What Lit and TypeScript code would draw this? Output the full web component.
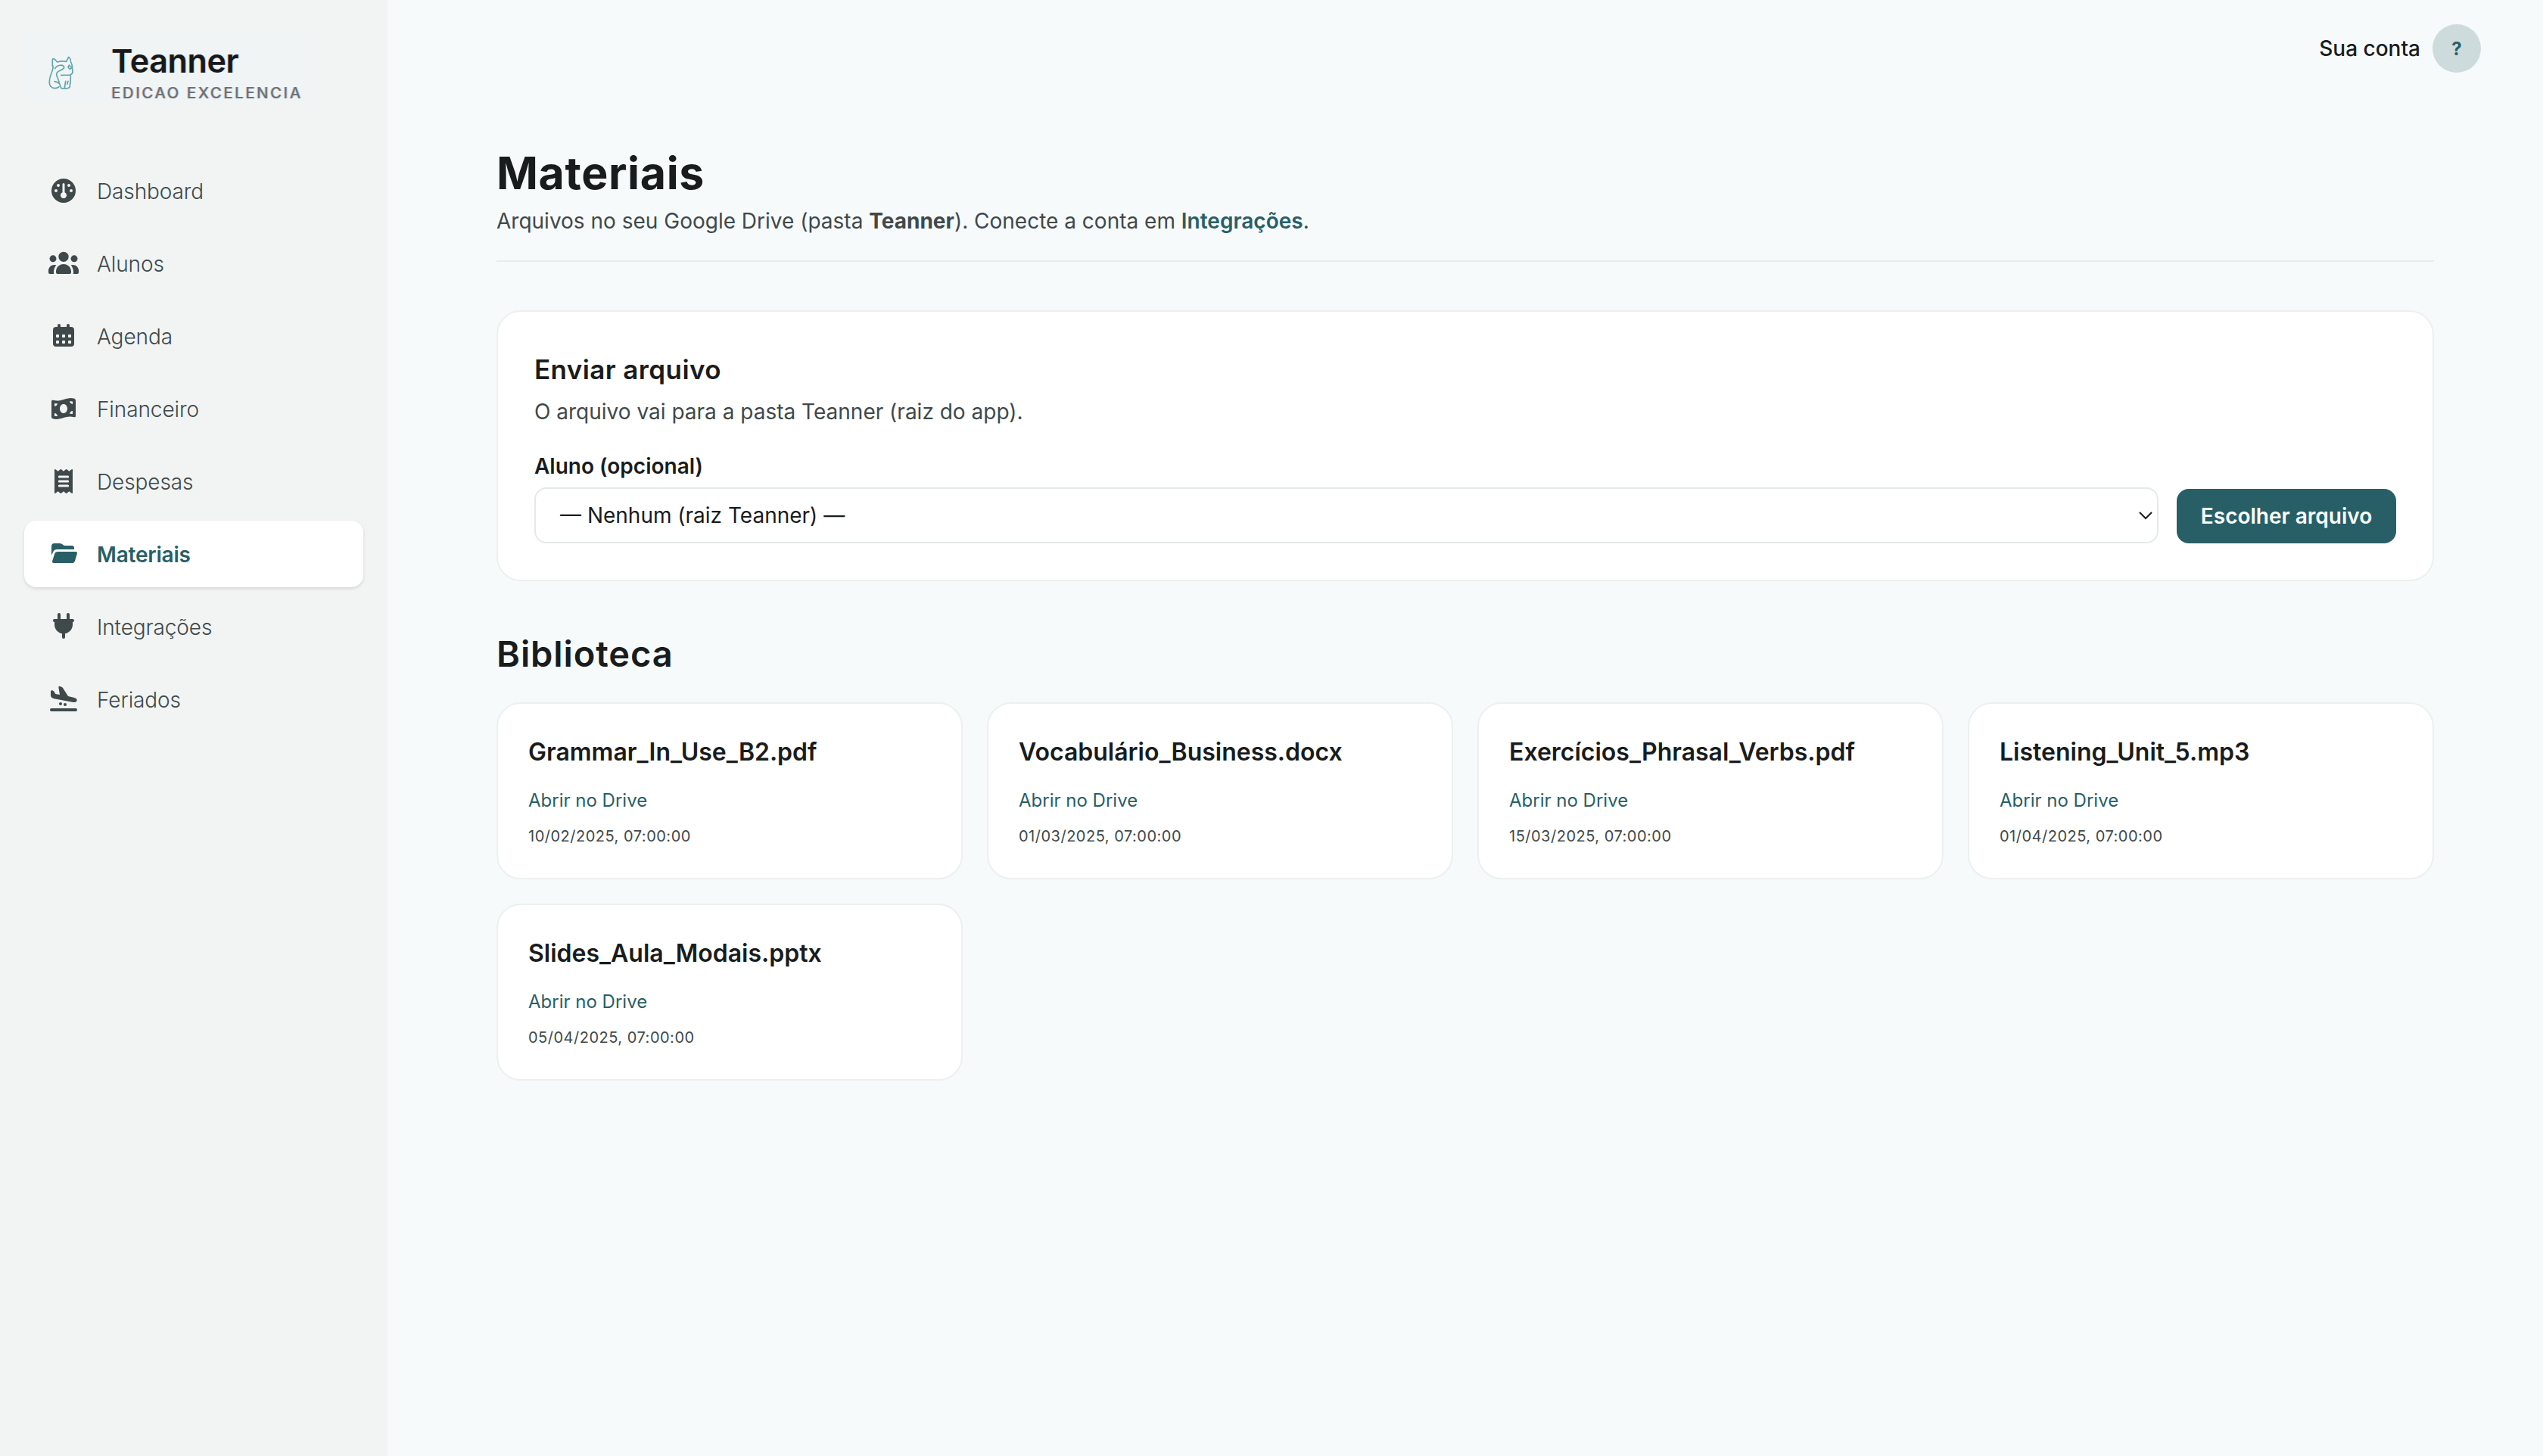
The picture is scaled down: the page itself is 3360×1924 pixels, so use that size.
import { LitElement, html, css, svg } from "lit";
import { customElement, property } from "lit/decorators.js";

const ICONS: Record<string, unknown> = {
  gauge: svg`<path fill-rule="evenodd" d="M60 12a48 48 0 1 0 0 96a48 48 0 1 0 0-96zM39 33a6 6 0 1 1 0 12a6 6 0 1 1 0-12zM81 33a6 6 0 1 1 0 12a6 6 0 1 1 0-12zM30 54a6 6 0 1 1 0 12a6 6 0 1 1 0-12zM90 54a6 6 0 1 1 0 12a6 6 0 1 1 0-12zM60 30a4.500 4.500 0 0 1 4.500 4.500V67a12 12 0 1 1-9 0V34.500A4.500 4.500 0 0 1 60 30z"/>`,
  users: svg`<circle cx="60" cy="34" r="20"/><circle cx="18" cy="41.500" r="13.500"/><circle cx="102" cy="41.500" r="13.500"/><path d="M30 93C30 76 43 63 60 63S90 76 90 93V96Q90 102 84 102H36Q30 102 30 96ZM0 90C0 76 10 66 24 66Q28 66 31 67C25 74 21 84 21 95V97Q21 100 22 102H6Q0 102 0 96ZM120 90C120 76 110 66 96 66Q92 66 89 67C95 74 99 84 99 95V97Q99 100 98 102H114Q120 102 120 96Z"/>`,
  calendar: svg`<path fill-rule="evenodd" d="M36 24V18a6 6 0 0 1 12 0v6H72V18a6 6 0 0 1 12 0v6H90a12 12 0 0 1 12 12V90a12 12 0 0 1-12 12H30a12 12 0 0 1-12-12V36a12 12 0 0 1 12-12zM33 54a3 3 0 0 0-3 3v6a3 3 0 0 0 3 3h6a3 3 0 0 0 3-3v-6a3 3 0 0 0-3-3zM57 54a3 3 0 0 0-3 3v6a3 3 0 0 0 3 3h6a3 3 0 0 0 3-3v-6a3 3 0 0 0-3-3zM81 54a3 3 0 0 0-3 3v6a3 3 0 0 0 3 3h6a3 3 0 0 0 3-3v-6a3 3 0 0 0-3-3zM33 78a3 3 0 0 0-3 3v6a3 3 0 0 0 3 3h6a3 3 0 0 0 3-3v-6a3 3 0 0 0-3-3zM57 78a3 3 0 0 0-3 3v6a3 3 0 0 0 3 3h6a3 3 0 0 0 3-3v-6a3 3 0 0 0-3-3zM81 78a3 3 0 0 0-3 3v6a3 3 0 0 0 3 3h6a3 3 0 0 0 3-3v-6a3 3 0 0 0-3-3z"/>`,
  money: svg`<path fill-rule="evenodd" d="M12 31Q12 25 18 26.500C35 31 48 28 60 24C72 20 88 15 103 20Q108 22 108 28V89Q108 95 102 93.500C85 89 72 92 60 96C48 100 32 105 17 100Q12 98 12 92ZM60 42C51.500 42 45 50 45 60S51.500 78 60 78S75 70 75 60S68.500 42 60 42ZM24 39V51Q34 50 36 40Q30 40 24 39ZM84 31Q86 41 96 42V31.500Q90 30.500 84 31ZM24 78V89Q30 90.500 36 90Q34 79 24 78ZM96 69Q86 70 84 80Q90 80 96 81Z"/>`,
  receipt: svg`<path fill-rule="evenodd" d="M24 15Q24 10 28 13L38 20L46 13.500Q49 11 52 13.500L60 20L68 13.500Q71 11 74 13.500L82 20L92 13Q96 10 96 15V105Q96 110 92 107L82 100L74 106.500Q71 109 68 106.500L60 100L52 106.500Q49 109 46 106.500L38 100L28 107Q24 110 24 105ZM43 37.500a4.500 4.500 0 0 0 0 9H77a4.500 4.500 0 0 0 0-9ZM43 55.500a4.500 4.500 0 0 0 0 9H77a4.500 4.500 0 0 0 0-9ZM43 73.500a4.500 4.500 0 0 0 0 9H77a4.500 4.500 0 0 0 0-9Z"/>`,
  folder: svg`<path d="M12 66V30Q12 18 24 18H44Q50 18 54 21L59 25Q62 27 66 27H93Q102 27 102 36V42H34Q22 42 18 53ZM37 51H107Q116 51 113.500 59L104.500 89Q102 96 95 96H21Q13 96 15.500 88L25 58Q28 51 37 51Z"/>`,
  plug: svg`<path d="M36 30V12a6 6 0 0 1 12 0V30H72V12a6 6 0 0 1 12 0V30H96a6 6 0 0 1 0 12V52C96 70 83 85 66 88V102a6 6 0 0 1-12 0V88C37 85 24 70 24 52V42a6 6 0 0 1 0-12Z"/>`,
  plane: svg`<path d="M9 29Q9 23 15 25L19 26Q21 27 22 29L28 39L45 42L40 13Q39 7 45 9L52 11Q55 12 57 15L78 48L100 53Q114 57 113 64Q112 74 99 72L22 58Q9 54 9 46Z"/><circle cx="48" cy="78" r="6"/><circle cx="66" cy="81" r="6"/><rect x="6" y="96" width="108" height="12" rx="6"/>`,
};

@customElement("nav-item")
class NavItem extends LitElement {
  @property() icon = "";
  @property() label = "";
  @property({ type: Boolean, reflect: true }) active = false;
  static styles = css`
    :host { display: flex; align-items: center; gap: 24px; height: 88px; padding: 0 32px; box-sizing: border-box; border-radius: 16px; color: #40494a; font-weight: 300; }
    :host([active]) { background: #fff; color: #285f66; font-weight: 600; box-shadow: 0 2px 4px rgba(0, 0, 0, 0.12); }
    .icon { width: 40px; height: 40px; fill: currentColor; flex: none; }
    .label { font-size: 28px; line-height: 40px; padding-top: 1px; letter-spacing: -0.1px; white-space: nowrap; }
    :host([active]) .label { letter-spacing: -0.2px; }
  `;
  render() {
    return html`<svg class="icon" viewBox="0 0 120 120">${ICONS[this.icon]}</svg><span class="label">${this.label}</span>`;
  }
}

@customElement("file-card")
class FileCard extends LitElement {
  @property() name = "";
  @property() date = "";
  static styles = css`
    :host { display: block; box-sizing: border-box; height: 234px; padding: 40px; background: #fff; border: 2px solid #ecf0f0; border-radius: 32px; }
    .name { font-size: 32px; line-height: 48px; font-weight: 600; color: #191c1d; }
    .link { display: block; margin-top: 24px; font-size: 24px; line-height: 32px; color: #285f66; text-decoration: none; }
    .date { margin-top: 16px; font-size: 20px; line-height: 30px; letter-spacing: 0.5px; color: #40494a; }
  `;
  render() {
    return html`<div class="name">${this.name}</div><a class="link">Abrir no Drive</a><div class="date">${this.date}</div>`;
  }
}

@customElement("app-root")
class AppRoot extends LitElement {
  private nav = [
    ["gauge", "Dashboard"], ["users", "Alunos"], ["calendar", "Agenda"], ["money", "Financeiro"],
    ["receipt", "Despesas"], ["folder", "Materiais"], ["plug", "Integrações"], ["plane", "Feriados"],
  ];
  private files = [
    ["Grammar_In_Use_B2.pdf", "10/02/2025, 07:00:00"],
    ["Vocabulário_Business.docx", "01/03/2025, 07:00:00"],
    ["Exercícios_Phrasal_Verbs.pdf", "15/03/2025, 07:00:00"],
    ["Listening_Unit_5.mp3", "01/04/2025, 07:00:00"],
    ["Slides_Aula_Modais.pptx", "05/04/2025, 07:00:00"],
  ];
  static styles = css`
    :host { display: flex; width: 100%; height: 1924px; background: #f7fafb; color: #191c1d; font-family: Inter, "Liberation Sans", sans-serif; overflow: hidden; }
    .sidebar { width: 512px; flex: none; box-sizing: border-box; padding: 40px 32px; background: #f1f4f3; display: flex; flex-direction: column; gap: 68px; }
    .brand { display: flex; height: 100px; margin-right: 64px; padding-left: 28px; box-sizing: border-box; background: #f0f4f5; gap: 47px; }
    .cat { width: 40px; height: 50px; margin-top: 30px; fill: none; stroke: #62a6a9; stroke-width: 5; stroke-linecap: round; stroke-linejoin: round; flex: none; }
    .brand-text { text-shadow: -1px 0 rgba(240, 150, 60, 0.35), 1px 0 rgba(60, 150, 240, 0.35); }
    .brand-name { font-size: 43px; line-height: 52px; font-weight: 600; padding-top: 14px; letter-spacing: -0.35px; color: #17191c; }
    .brand-sub { font-size: 20.500px; line-height: 26px; font-weight: 500; letter-spacing: 2.500px; color: #6b7078; margin-top: 4px; white-space: nowrap; }
    .menu { display: flex; flex-direction: column; gap: 8px; }
    .main { flex: 1; min-width: 0; display: flex; flex-direction: column; }
    .topbar { height: 128px; box-sizing: border-box; padding: 0 82px 0 0; display: flex; align-items: center; justify-content: flex-end; gap: 16px; font-size: 28px; font-weight: 500; }
    .avatar { width: 64px; height: 64px; border-radius: 50%; background: #cedbdd; color: #285f66; font-size: 24px; font-weight: 700; display: flex; align-items: center; justify-content: center; }
    .content { padding: 65px 144px 0; }
    .head { padding-bottom: 32px; border-bottom: 2px solid #e8eced; margin-bottom: 64px; }
    .h1 { margin: 0; font-size: 59px; line-height: 72px; font-weight: 700; letter-spacing: 0.65px; }
    .sub { margin: 7px 0 0; font-size: 28px; line-height: 40px; color: #40494a; }
    .strong { font-weight: 700; }
    .accent { font-weight: 600; color: #285f66; }
    .panel { background: #fff; border: 2px solid #ecf0f0; border-radius: 32px; padding: 48px; }
    .h2 { margin: 0; font-size: 35px; line-height: 56px; font-weight: 600; letter-spacing: 0.4px; }
    .hint { margin: 8px 0 32px; font-size: 28px; line-height: 40px; color: #40494a; }
    .row { display: flex; align-items: flex-end; gap: 24px; }
    .field { flex: 1; display: flex; flex-direction: column; gap: 8px; }
    .label { font-size: 28px; line-height: 40px; font-weight: 600; }
    .select { height: 74px; box-sizing: border-box; border: 2px solid #e4e9e9; border-radius: 16px; padding: 0 5px 0 32px; display: flex; align-items: center; justify-content: space-between; font-size: 28px; }
    .chev { width: 20px; height: 12px; fill: none; stroke: #191c1d; stroke-width: 2; }
    .button { width: 290px; height: 72px; border-radius: 16px; background: #285f66; color: #fff; font-size: 28px; font-weight: 600; display: flex; align-items: center; justify-content: center; }
    .h2b { margin: 64px 0 32px; font-size: 47px; line-height: 64px; font-weight: 600; letter-spacing: 0.9px; }
    .grid { display: grid; grid-template-columns: repeat(4, 1fr); gap: 32px; }
  `;
  render() {
    return html`
      <aside class="sidebar">
        <div class="brand">
          <svg class="cat" viewBox="60 60 120 150">
            <path d="M88 112V86Q90 80 97 85L107 96Q124 90 143 94L152 76Q161 82 160 94Q166 104 167 118M154 108L166 120L156 124L150 116ZM167 122Q172 142 158 147L122 148M98 122C106 106 132 104 134 117C134 128 108 128 104 142C102 152 112 160 114 176L122 199M90 112C92 132 76 146 76 172C74 190 84 200 98 200Q108 200 114 194M96 173Q106 174 112 180M160 150Q161 172 156 196Q150 202 124 200M140 172L136 198M150 172L146 184"/>
          </svg>
          <div class="brand-text">
            <div class="brand-name">Teanner</div>
            <div class="brand-sub">EDICAO EXCELENCIA</div>
          </div>
        </div>
        <nav class="menu">
          ${this.nav.map(([i, l]) => html`<nav-item .icon=${i} .label=${l} ?active=${l === "Materiais"}></nav-item>`)}
        </nav>
      </aside>
      <main class="main">
        <div class="topbar"><span>Sua conta</span><span class="avatar">?</span></div>
        <div class="content">
          <header class="head">
            <h1 class="h1">Materiais</h1>
            <p class="sub">Arquivos no seu Google Drive (pasta <span class="strong">Teanner</span>). Conecte a conta em <span class="accent">Integrações</span>.</p>
          </header>
          <section class="panel">
            <h2 class="h2">Enviar arquivo</h2>
            <p class="hint">O arquivo vai para a pasta Teanner (raiz do app).</p>
            <div class="row">
              <div class="field">
                <span class="label">Aluno (opcional)</span>
                <div class="select"><span>— Nenhum (raiz Teanner) —</span><svg class="chev" viewBox="0 0 20 12"><path d="M2 2L10 10L18 2"/></svg></div>
              </div>
              <div class="button">Escolher arquivo</div>
            </div>
          </section>
          <h2 class="h2b">Biblioteca</h2>
          <div class="grid">
            ${this.files.map(([n, d]) => html`<file-card .name=${n} .date=${d}></file-card>`)}
          </div>
        </div>
      </main>
    `;
  }
}
